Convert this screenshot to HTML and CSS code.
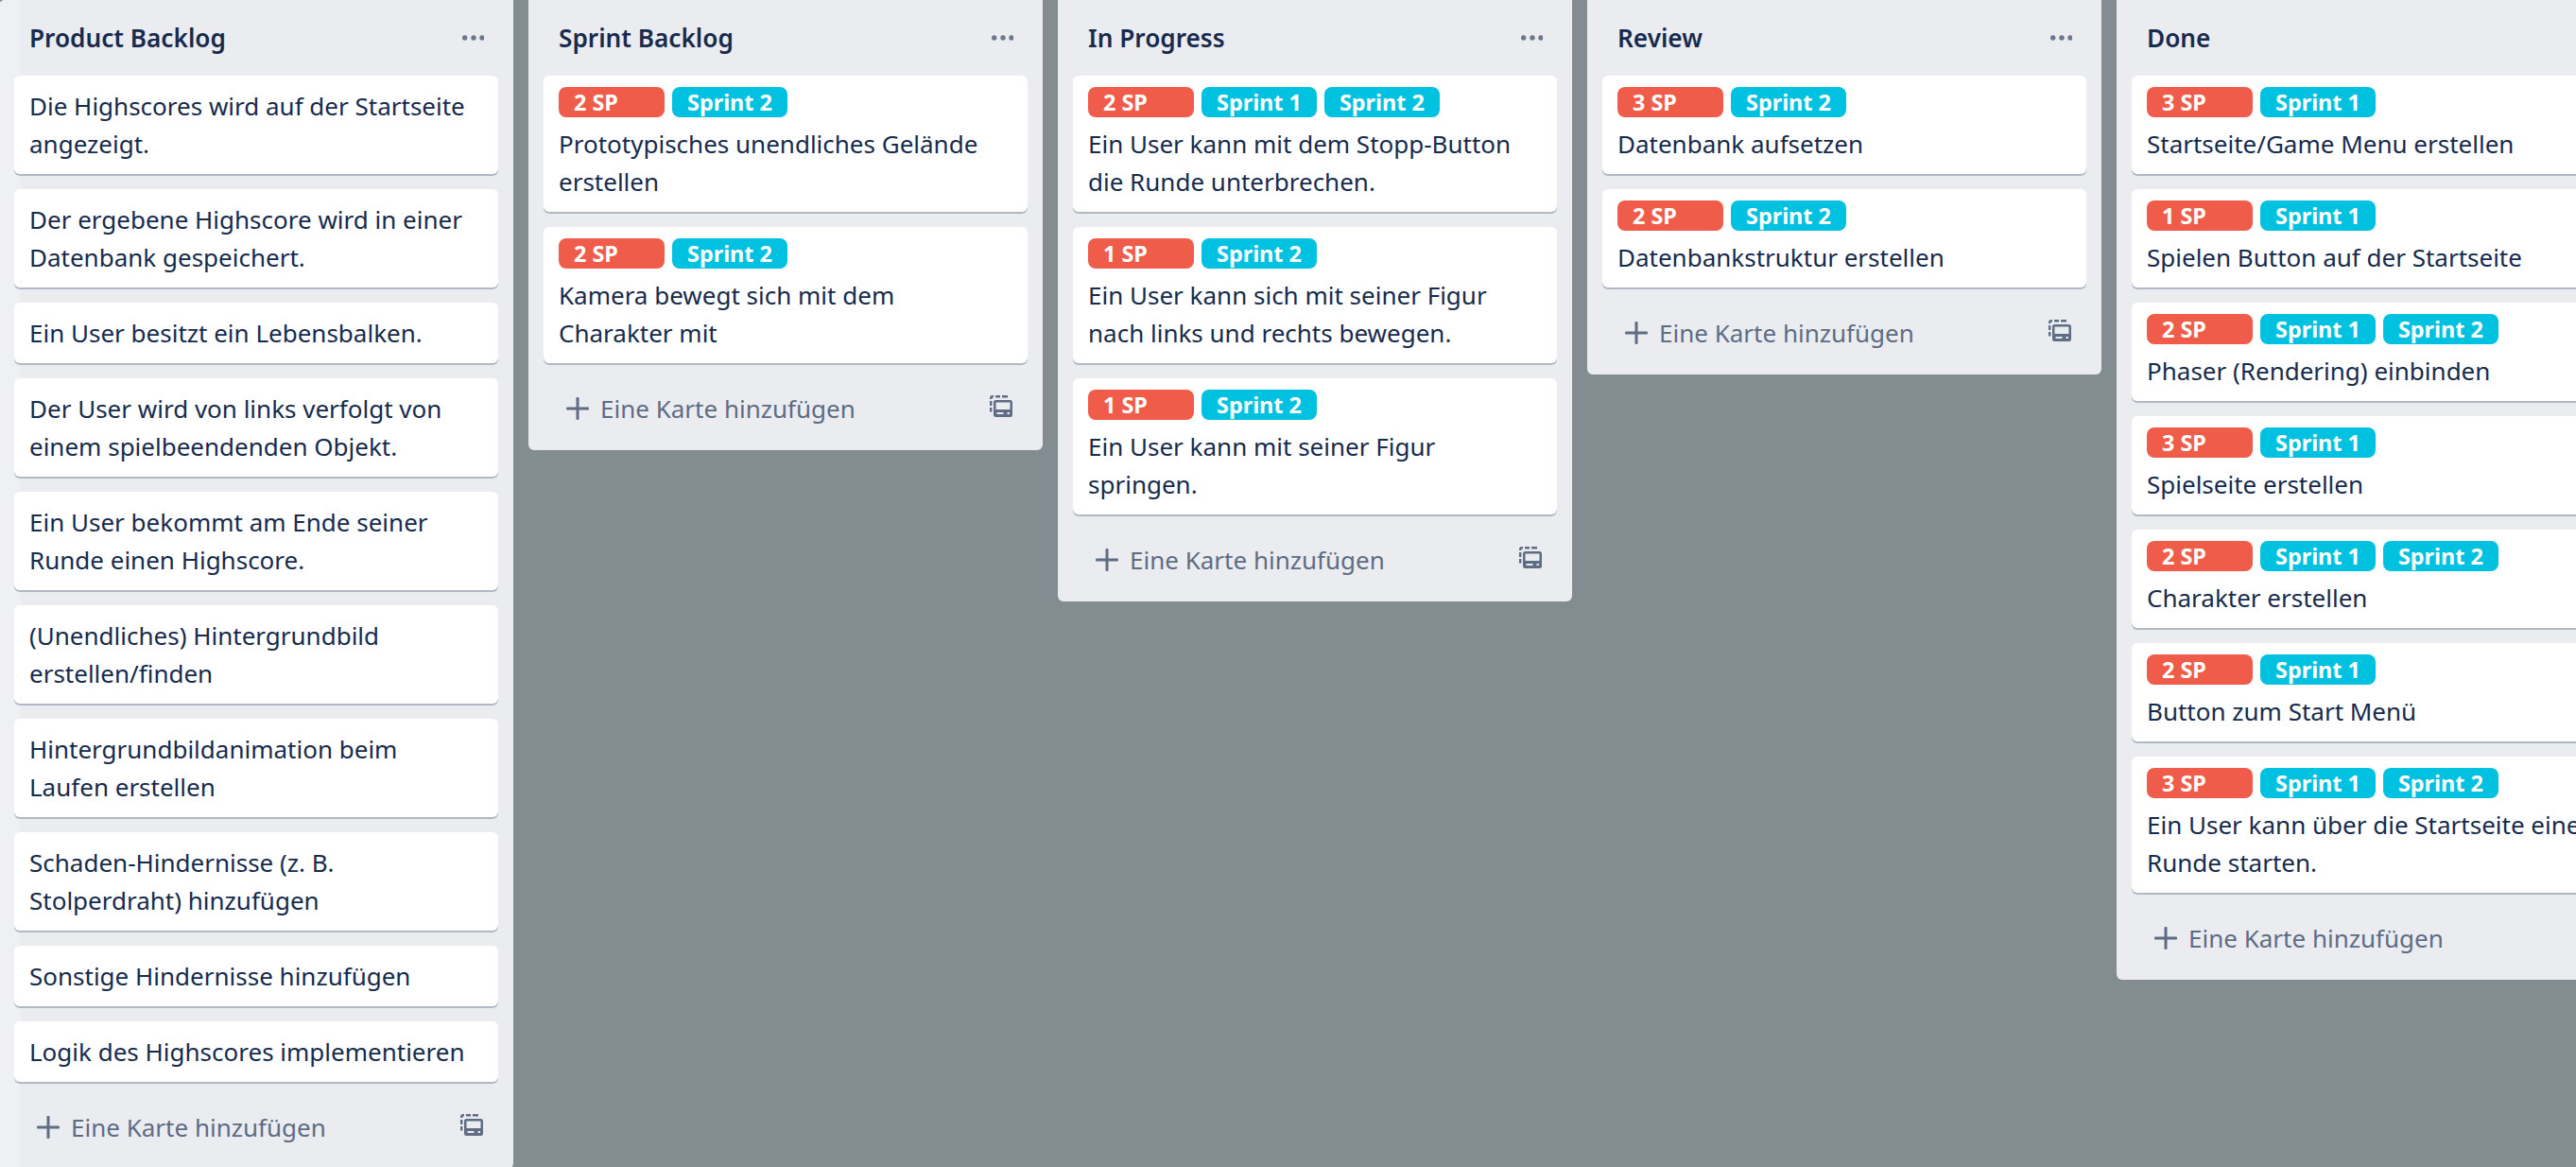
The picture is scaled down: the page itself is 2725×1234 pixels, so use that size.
FILE: index.html
```html
<!DOCTYPE html>
<html lang="de">
<head>
<meta charset="utf-8">
<title>Board</title>
<link rel="stylesheet" href="styles.css">
</head>
<body>
<svg class="defs" width="0" height="0" aria-hidden="true">
  <symbol id="i-more" viewBox="0 0 24 8"><circle cx="3.700" cy="4" r="2.700"/><circle cx="13" cy="4" r="2.700"/><circle cx="22" cy="4" r="2.700"/></symbol>
  <symbol id="i-plus" viewBox="0 0 24 24"><rect x="10.500" y="0" width="3" height="24" rx="1.200"/><rect x="0" y="10.500" width="24" height="3" rx="1.200"/></symbol>
  <symbol id="i-tpl" viewBox="0 0 24 24"><path fill-rule="evenodd" d="M6.500 5h15A2.500 2.500 0 0 1 24 7.500V20.500A2.500 2.500 0 0 1 21.500 23h-15A2.500 2.500 0 0 1 4 20.500V7.500A2.500 2.500 0 0 1 6.500 5ZM6.500 7.500V15h15V7.500ZM7.500 18v2h7v-2ZM18.500 18v2h2.500v-2Z"/><path d="M0 3a3 3 0 0 1 3-3h1v2.400H3A.6.6 0 0 0 2.400 3v1H0ZM6 0h5v2.400H6ZM13 0h6v2.400h-6ZM0 6h2.400v5H0ZM0 13h2.400v4.500H0Z"/></symbol>
</svg>
<main class="board">

  <section class="list list-first">
    <div class="strip"></div>
    <header class="list-head"><h2>Product Backlog</h2><svg class="more"><use href="#i-more"/></svg></header>
    <article class="card"><p>Die Highscores wird auf der Startseite angezeigt.</p></article>
    <article class="card"><p>Der ergebene Highscore wird in einer Datenbank gespeichert.</p></article>
    <article class="card"><p>Ein User besitzt ein Lebensbalken.</p></article>
    <article class="card"><p>Der User wird von links verfolgt von einem spielbeendenden Objekt.</p></article>
    <article class="card"><p>Ein User bekommt am Ende seiner Runde einen Highscore.</p></article>
    <article class="card"><p>(Unendliches) Hintergrundbild erstellen/finden</p></article>
    <article class="card"><p>Hintergrundbildanimation beim Laufen erstellen</p></article>
    <article class="card"><p>Schaden-Hindernisse (z. B. Stolperdraht) hinzufügen</p></article>
    <article class="card"><p>Sonstige Hindernisse hinzufügen</p></article>
    <article class="card"><p>Logik des Highscores implementieren</p></article>
    <footer class="list-foot"><svg class="plus"><use href="#i-plus"/></svg><span class="add">Eine Karte hinzufügen</span><svg class="tpl"><use href="#i-tpl"/></svg></footer>
  </section>

  <section class="list">
    <header class="list-head"><h2>Sprint Backlog</h2><svg class="more"><use href="#i-more"/></svg></header>
    <article class="card"><div class="labels"><span class="label sp">2 SP</span><span class="label sprint">Sprint 2</span></div><p>Prototypisches unendliches Gelände erstellen</p></article>
    <article class="card"><div class="labels"><span class="label sp">2 SP</span><span class="label sprint">Sprint 2</span></div><p>Kamera bewegt sich mit dem Charakter mit</p></article>
    <footer class="list-foot"><svg class="plus"><use href="#i-plus"/></svg><span class="add">Eine Karte hinzufügen</span><svg class="tpl"><use href="#i-tpl"/></svg></footer>
  </section>

  <section class="list">
    <header class="list-head"><h2>In Progress</h2><svg class="more"><use href="#i-more"/></svg></header>
    <article class="card"><div class="labels"><span class="label sp">2 SP</span><span class="label sprint">Sprint 1</span><span class="label sprint">Sprint 2</span></div><p>Ein User kann mit dem Stopp-Button die Runde unterbrechen.</p></article>
    <article class="card"><div class="labels"><span class="label sp">1 SP</span><span class="label sprint">Sprint 2</span></div><p>Ein User kann sich mit seiner Figur nach links und rechts bewegen.</p></article>
    <article class="card"><div class="labels"><span class="label sp">1 SP</span><span class="label sprint">Sprint 2</span></div><p>Ein User kann mit seiner Figur springen.</p></article>
    <footer class="list-foot"><svg class="plus"><use href="#i-plus"/></svg><span class="add">Eine Karte hinzufügen</span><svg class="tpl"><use href="#i-tpl"/></svg></footer>
  </section>

  <section class="list">
    <header class="list-head"><h2>Review</h2><svg class="more"><use href="#i-more"/></svg></header>
    <article class="card"><div class="labels"><span class="label sp">3 SP</span><span class="label sprint">Sprint 2</span></div><p>Datenbank aufsetzen</p></article>
    <article class="card"><div class="labels"><span class="label sp">2 SP</span><span class="label sprint">Sprint 2</span></div><p>Datenbankstruktur erstellen</p></article>
    <footer class="list-foot"><svg class="plus"><use href="#i-plus"/></svg><span class="add">Eine Karte hinzufügen</span><svg class="tpl"><use href="#i-tpl"/></svg></footer>
  </section>

  <section class="list">
    <header class="list-head"><h2>Done</h2><svg class="more"><use href="#i-more"/></svg></header>
    <article class="card"><div class="labels"><span class="label sp">3 SP</span><span class="label sprint">Sprint 1</span></div><p>Startseite/Game Menu erstellen</p></article>
    <article class="card"><div class="labels"><span class="label sp">1 SP</span><span class="label sprint">Sprint 1</span></div><p>Spielen Button auf der Startseite</p></article>
    <article class="card"><div class="labels"><span class="label sp">2 SP</span><span class="label sprint">Sprint 1</span><span class="label sprint">Sprint 2</span></div><p>Phaser (Rendering) einbinden</p></article>
    <article class="card"><div class="labels"><span class="label sp">3 SP</span><span class="label sprint">Sprint 1</span></div><p>Spielseite erstellen</p></article>
    <article class="card"><div class="labels"><span class="label sp">2 SP</span><span class="label sprint">Sprint 1</span><span class="label sprint">Sprint 2</span></div><p>Charakter erstellen</p></article>
    <article class="card"><div class="labels"><span class="label sp">2 SP</span><span class="label sprint">Sprint 1</span></div><p>Button zum Start Menü</p></article>
    <article class="card"><div class="labels"><span class="label sp">3 SP</span><span class="label sprint">Sprint 1</span><span class="label sprint">Sprint 2</span></div><p>Ein User kann über die Startseite eine Runde starten.</p></article>
    <footer class="list-foot"><svg class="plus"><use href="#i-plus"/></svg><span class="add">Eine Karte hinzufügen</span><svg class="tpl"><use href="#i-tpl"/></svg></footer>
  </section>

</main>
</body>
</html>
```

FILE: styles.css
```css
* { box-sizing: border-box; }
html, body { height: 100%; overflow: hidden; }
body {
  margin: 0;
  background: #838c91;
  color: #172b4d;
  font-family: "Noto Sans", "Open Sans", sans-serif;
  font-size: 26px;
  line-height: 40px;
}
.defs { position: absolute; }
.board {
  display: flex;
  align-items: flex-start;
  gap: 16px;
  margin-left: -1px;
  width: calc(100% + 1px);
  height: 100vh;
  overflow: hidden;
}
.list {
  position: relative;
  flex: 0 0 544px;
  width: 544px;
  background: #ebecf0;
  border-radius: 0 0 6px 6px;
}
.list-first { border-radius: 6px 0 6px 6px; }
.strip {
  position: absolute;
  left: 0;
  top: 0;
  bottom: 0;
  width: 22px;
  background: #eff0f3;
  border-top-left-radius: 6px;
}
.list-head {
  position: relative;
  height: 80px;
  display: flex;
  align-items: center;
  justify-content: space-between;
  padding: 0 31px 0 31px;
}
.list-head h2 {
  margin: 0 0 0 1px;
  font-size: 26.2px;
  font-weight: 600;
  line-height: 40px;
}
.more { width: 24px; height: 8px; fill: #6b778c; }
.card {
  position: relative;
  margin: 0 16px 16px;
  padding: 12px 16px;
  background: #fff;
  border-radius: 6px;
  box-shadow: 0 2px 0 rgba(9, 30, 66, .25);
}
.card p { margin: 0; }
.labels {
  display: flex;
  gap: 8px;
  margin-bottom: 8px;
}
.label {
  height: 32px;
  padding: 0 16px;
  border-radius: 8px;
  color: #fff;
  font-size: 23.400px;
  font-weight: 700;
  line-height: 32px;
}
.sp { min-width: 112px; background: #ef5d4a; }
.sprint { background: #00c2e0; }
.list-foot {
  position: relative;
  display: flex;
  align-items: center;
  padding: 12px 32px 24px 40px;
  color: #5e6c84;
}
.plus { width: 24px; height: 24px; fill: #5e6c84; flex: none; margin-right: 12px; }
.add { flex: 1; }
.tpl { width: 24px; height: 24px; fill: #5e6c84; flex: none; margin-top: -4px; }
```
